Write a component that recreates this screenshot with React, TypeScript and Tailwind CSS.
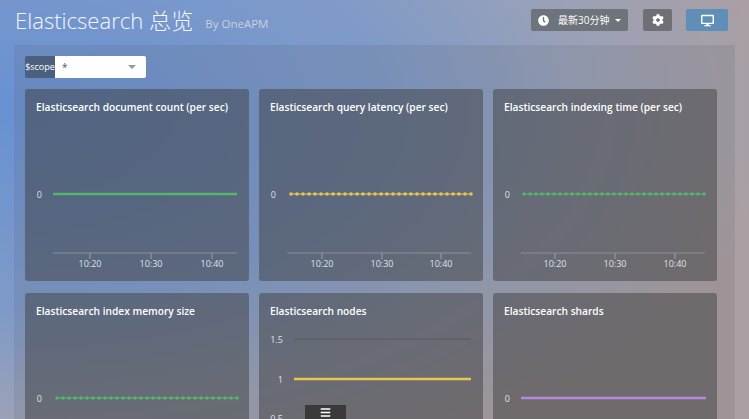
import React from "react";
import { FaBars, FaClock, FaCog, FaDesktop } from "react-icons/fa";

type Line = { x1: number; x2: number; y: number; color: string; dots?: boolean };
type ChartProps = {
  title: string;
  line: Line;
  yLabels: { text: string; x: number; y: number }[];
  ticks?: number[];
  axisStart?: number;
  grid?: { x1: number; x2: number; y: number }[];
};

function Chart({ title, line, yLabels, ticks, axisStart, grid }: ChartProps) {
  const dots: number[] = [];
  if (line.dots) for (let x = line.x1 + 1; x <= line.x2; x += 6) dots.push(x);
  const names = ["10:20", "10:30", "10:40"];
  return (
    <div className="relative h-[192px] rounded-[3px] bg-[rgba(60,60,60,0.47)]">
      <div className="px-[11px] pt-[12px] text-[10.2px] leading-[13px] font-semibold whitespace-nowrap text-white">{title}</div>
      <svg className="absolute top-0 left-0 overflow-visible" width="224" height="192">
        {grid?.map((g) => (
          <line key={g.y} x1={g.x1} x2={g.x2} y1={g.y} y2={g.y} stroke="#5a5a5a" strokeWidth="1" />
        ))}
        <line x1={line.x1} x2={line.x2} y1={line.y} y2={line.y} stroke={line.color} strokeWidth={line.dots ? 1.2 : 2.5} />
        {dots.map((x) => (
          <circle key={x} cx={x} cy={line.y} r="1.8" fill={line.color} />
        ))}
        {yLabels.map((l) => (
          <text key={l.text} x={l.x} y={l.y + 3.5} textAnchor="end" fontSize="9" fill="#dfe3e8">
            {l.text}
          </text>
        ))}
        {ticks && (
          <line x1={axisStart} x2={212} y1={164} y2={164} stroke="#8a8f98" strokeWidth="1" />
        )}
        {ticks?.map((t, i) => (
          <g key={t}>
            <line x1={t} x2={t} y1={164} y2={170} stroke="#9aa0a8" strokeWidth="1" />
            <text x={t} y={178} textAnchor="middle" fontSize="9" fill="#dfe3e8">
              {names[i]}
            </text>
          </g>
        ))}
      </svg>
    </div>
  );
}

export default function App() {
  return (
    <div className="relative h-[419px] w-[749px] overflow-hidden bg-[radial-gradient(ellipse_780px_400px_at_0px_110px,#6891d3_0%,#7f9ac8_50%,#99a1b8_75%,#aa9fa3_100%)] font-['Open_Sans','Noto_Sans_CJK_SC',sans-serif]">
      <div className="flex h-[45px] items-start pr-[21px] pl-[15px]">
        <h1 className="pt-[4px] text-[22.1px] leading-[32px] font-light text-[#f4f6fa]">Elasticsearch 总览</h1>
        <span className="ml-[12px] pt-[16px] text-[11.5px] leading-[16px] text-[#c9d0dc]">By OneAPM</span>
        <div className="ml-auto flex items-start pt-[9px]">
          <button className="flex h-[22px] w-[97px] items-center rounded-[2px] bg-[#6f737c] pl-[7px] text-[10px] text-white">
            <FaClock className="h-[11px] w-[11px]" />
            <span className="ml-[9px]">最新30分钟</span>
            <span className="ml-[6px] h-0 w-0 border-x-[3px] border-t-[3px] border-x-transparent border-t-white" />
          </button>
          <button className="ml-[15px] flex h-[22px] w-[29px] items-center justify-center rounded-[2px] bg-[#6f6f75] text-white">
            <FaCog className="h-[12px] w-[12px]" />
          </button>
          <button className="ml-[14px] flex h-[22px] w-[42px] items-center justify-center rounded-[2px] bg-[#5f8fb6] text-white">
            <FaDesktop className="h-[13px] w-[13px]" />
          </button>
        </div>
      </div>

      <div className="mx-[14px] h-[374px] bg-[rgba(70,70,70,0.12)] px-[11px] pt-[11px]">
        <div className="flex h-[22px] w-[121px] overflow-hidden rounded-[2px]">
          <div className="flex w-[30px] items-center justify-center bg-[#4d5f7e] text-[9px] text-white">$scope</div>
          <div className="flex flex-1 items-center justify-between bg-white pr-[10px] pl-[7px] text-[10px] text-[#555]">
            <span>*</span>
            <span className="h-0 w-0 border-x-[4px] border-t-[4px] border-x-transparent border-t-[#999]" />
          </div>
        </div>
        <div className="mt-[11px] grid grid-cols-[224px_224px_224px] gap-x-[10px] gap-y-[12px]">
          <Chart
            title="Elasticsearch document count (per sec)"
            line={{ x1: 28, x2: 212, y: 105, color: "#55b56a" }}
            yLabels={[{ text: "0", x: 17, y: 105 }]}
            ticks={[65, 126, 187]}
            axisStart={28}
          />
          <Chart
            title="Elasticsearch query latency (per sec)"
            line={{ x1: 31, x2: 212, y: 105, color: "#e8c64e", dots: true }}
            yLabels={[{ text: "0", x: 17, y: 105 }]}
            ticks={[63, 123, 182]}
            axisStart={28}
          />
          <Chart
            title="Elasticsearch indexing time (per sec)"
            line={{ x1: 30, x2: 213, y: 105, color: "#55b56a", dots: true }}
            yLabels={[{ text: "0", x: 17, y: 105 }]}
            ticks={[62, 122, 182]}
            axisStart={28}
          />
          <Chart
            title="Elasticsearch index memory size"
            line={{ x1: 31, x2: 212, y: 105, color: "#55b56a", dots: true }}
            yLabels={[{ text: "0", x: 17, y: 105 }]}
          />
          <Chart
            title="Elasticsearch nodes"
            line={{ x1: 35, x2: 212, y: 86, color: "#e8c64e" }}
            yLabels={[
              { text: "1.5", x: 24, y: 46 },
              { text: "1", x: 24, y: 86 },
              { text: "0.5", x: 24, y: 125 },
            ]}
            grid={[{ x1: 35, x2: 212, y: 46 }]}
          />
          <Chart
            title="Elasticsearch shards"
            line={{ x1: 28, x2: 213, y: 105, color: "#b28ae0" }}
            yLabels={[{ text: "0", x: 17, y: 105 }]}
          />
        </div>
      </div>

      <div className="absolute bottom-0 left-[305px] flex h-[14px] w-[41px] items-center justify-center bg-[#3a3a3a] text-white">
        <FaBars className="h-[11px] w-[11px]" />
      </div>
    </div>
  );
}
